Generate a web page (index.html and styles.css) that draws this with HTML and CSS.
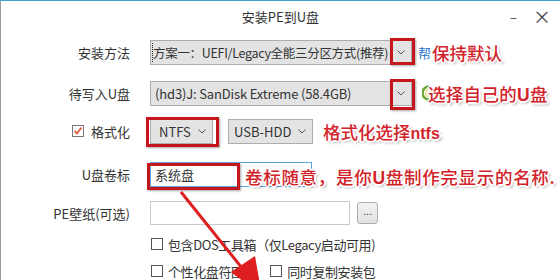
FILE: index.html
```html
<!DOCTYPE html>
<html lang="zh-CN">
<head>
    <meta charset="UTF-8">
    <title>安装PE到U盘</title>
    <link rel="stylesheet" href="styles.css">
</head>
<body>
    <div class="window">
        <div class="titlebar">
            <span></span>
            <span class="title">安装PE到U盘</span>
            <span class="controls">
                <span class="min">–</span>
                <span class="close">×</span>
            </span>
        </div>

        <div class="row r1">
            <label class="label">安装方法</label>
            <div class="select s-method">
                <span class="value"><span class="dotted">方案一：UEFI/Legacy全能三分区方式(推荐)</span></span>
                <span class="chev"><svg width="8" height="5" viewBox="0 0 8 5"><polyline points="0.5,0.5 4,4 7.5,0.5" fill="none" stroke="#555" stroke-width="1"/></svg></span>
                <span class="mark m-arrow"></span>
            </div>
            <span class="help">帮</span>
            <span class="note">保持默认</span>
        </div>

        <div class="row r2">
            <label class="label">待写入U盘</label>
            <div class="select s-disk">
                <span class="value">(hd3)J: SanDisk Extreme (58.4GB)</span>
                <span class="chev"><svg width="8" height="5" viewBox="0 0 8 5"><polyline points="0.5,0.5 4,4 7.5,0.5" fill="none" stroke="#555" stroke-width="1"/></svg></span>
                <span class="mark m-arrow2"></span>
            </div>
            <svg class="refresh" width="8" height="16" viewBox="0 0 8 16">
                <path d="M7 1.5 A6.5 6.5 0 0 0 7 14.5" fill="none" stroke="#6aa82e" stroke-width="2.6"/>
                <path d="M7.5 4 A4 4 0 0 0 7.5 12" fill="none" stroke="#e8d44a" stroke-width="1"/>
            </svg>
            <span class="note note-disk">选择自己的<b>U</b>盘</span>
        </div>

        <div class="row r3">
            <label class="label">
                <span class="check checked"><svg width="10" height="10" viewBox="0 0 10 10"><polyline points="1.5,5 4,7.5 8.5,1.5" fill="none" stroke="#e05a36" stroke-width="1.8"/></svg></span>
                格式化
            </label>
            <div class="select s-fs">
                <span class="value">NTFS</span>
                <span class="chev"><svg width="8" height="5" viewBox="0 0 8 5"><polyline points="0.5,0.5 4,4 7.5,0.5" fill="none" stroke="#555" stroke-width="1"/></svg></span>
                <span class="mark m-fs"></span>
            </div>
            <div class="select s-mode">
                <span class="value">USB-HDD</span>
                <span class="chev"><svg width="8" height="5" viewBox="0 0 8 5"><polyline points="0.5,0.5 4,4 7.5,0.5" fill="none" stroke="#555" stroke-width="1"/></svg></span>
            </div>
            <span class="note">格式化选择<b class="small">ntfs</b></span>
        </div>

        <div class="row r4">
            <label class="label">U盘卷标</label>
            <div class="input i-label focused">
                系统盘
                <span class="mark m-label"></span>
            </div>
            <span class="note note-over">卷标随意，是你<b>U</b>盘制作完显示的名称.</span>
        </div>

        <div class="row r5">
            <label class="label">PE壁纸(可选)</label>
            <div class="input i-wall"></div>
            <button class="browse">...</button>
        </div>

        <div class="row r6 opts">
            <span class="opt"><span class="check"></span>包含DOS工具箱（仅Legacy启动可用)</span>
        </div>

        <div class="row r7 opts">
            <span class="opt"><span class="check"></span>个性化盘符图标</span>
            <span class="opt"><span class="check"></span>同时复制安装包</span>
        </div>

        <svg class="arrow" width="560" height="280" viewBox="0 0 560 280">
            <line x1="181" y1="192" x2="250" y2="278" stroke="#dd1f1f" stroke-width="3"/>
            <polygon points="262,296 231,272 255,256" fill="#dd1f1f"/>
        </svg>
    </div>
</body>
</html>
```

FILE: styles.css
```css
* {
    box-sizing: border-box;
}
body {
    margin: 0;
    background: #fff;
    font-family: "Noto Sans CJK SC", "Liberation Sans", sans-serif;
    font-size: 13px;
    color: #333;
}
.window {
    position: relative;
    width: 560px;
    height: 280px;
    overflow: hidden;
    border-top: 1px solid #3c9fd0;
    border-left: 1px solid #9a9a9a;
    background: #fff;
}
.titlebar {
    display: grid;
    grid-template-columns: 1fr auto 1fr;
    align-items: center;
    height: 30px;
    margin-bottom: 8px;
}
.title {
    font-size: 13px;
    color: #333;
}
.controls {
    display: flex;
    justify-content: flex-end;
    gap: 16px;
    padding-right: 9px;
    color: #444;
}
.controls .min {
    font-size: 13px;
}
.controls .close {
    font-size: 18px;
    line-height: 1;
}
.row {
    position: relative;
    display: flex;
    align-items: center;
    height: 26px;
}
.r2 { margin-top: 15px; }
.r3 { margin-top: 12px; }
.r4 { margin-top: 17px; }
.r5 { margin-top: 13px; }
.r6 { margin-top: 10px; height: 16px; }
.r7 { margin-top: 11px; height: 16px; }
.label {
    display: flex;
    align-items: center;
    justify-content: flex-end;
    gap: 7px;
    width: 129px;
    margin-right: 20px;
    white-space: nowrap;
}
.select {
    position: relative;
    display: flex;
    align-items: center;
    height: 25px;
    background: #e3e3e3;
    border: 1px solid #adadad;
    white-space: nowrap;
}
.select .value {
    flex: 1;
    padding-left: 4px;
    overflow: hidden;
}
.select .chev {
    display: flex;
    align-items: center;
    justify-content: center;
    width: 20px;
}
.dotted {
    display: block;
    outline: 1px dotted #222;
    padding: 1px 1px 1px 0;
}
.s-method { width: 262px; }
.s-method .value {
    padding-left: 2px;
    font-size: 12.5px;
    letter-spacing: -0.3px;
}
.s-disk { width: 262px; }
.s-disk .value { letter-spacing: -0.15px; }
.s-fs { width: 63px; }
.s-mode { width: 85px; margin-left: 15px; }
.s-mode .value { padding-left: 5px; }
.s-fs .value { padding-left: 8px; }
.mark {
    position: absolute;
    border: 3px solid #c4161c;
    box-shadow: 1px 1px 2px rgba(0, 0, 0, 0.35);
}
.m-arrow { right: -4px; top: -3px; width: 25px; height: 27px; }
.m-arrow2 { right: -4px; top: -3px; width: 25px; height: 31px; }
.m-fs { left: -5px; top: -3px; width: 73px; height: 30px; }
.m-label { left: -4px; top: 0; width: 93px; height: 27px; }
.help {
    margin-left: 6px;
    color: #2a73c8;
}
.refresh {
    margin-left: 10px;
}
.note {
    font-size: 17.5px;
    font-weight: 500;
    color: #d3232a;
    white-space: nowrap;
    text-shadow: -1px -1px 0 #fff, 1px -1px 0 #fff, -1px 1px 0 #fff, 1px 1px 0 #fff,
        0 -2px 0 #fff, 0 2px 0 #fff, -2px 0 0 #fff, 2px 0 0 #fff,
        2px 2px 3px rgba(0, 0, 0, 0.45);
}
.note b {
    font-family: "Liberation Sans", sans-serif;
    font-weight: bold;
}
.note b.small {
    font-size: 16px;
}
.r1 .note { margin-left: 1px; }
.r3 .note { margin-left: 10px; }
.note-disk { margin-left: -2px; letter-spacing: 0.3px; }
.note-over {
    position: absolute;
    left: 244px;
    top: 3px;
    letter-spacing: 0.7px;
}
.input {
    position: relative;
    display: flex;
    align-items: center;
    height: 25px;
    background: #fff;
    border: 1px solid #c9c9c9;
    padding-left: 4px;
}
.i-label { width: 162px; }
.focused { border-color: #5aa7e0; }
.i-wall { width: 200px; height: 24px; }
.browse {
    width: 21px;
    height: 22px;
    margin-left: 7px;
    padding: 0 0 4px;
    border: 1px solid #adadad;
    border-radius: 3px;
    background: linear-gradient(#f2f2f2, #e2e2e2);
    font-family: "Liberation Sans", sans-serif;
    font-size: 11px;
    color: #333;
}
.opts {
    padding-left: 150px;
    gap: 14px;
}
.opt {
    display: flex;
    align-items: center;
    gap: 5px;
    white-space: nowrap;
    letter-spacing: -0.4px;
}
.check {
    display: inline-flex;
    align-items: center;
    justify-content: center;
    width: 12px;
    height: 12px;
    border: 1px solid #555;
    background: #fff;
}
.check.checked {
    border-color: #777;
}
.arrow {
    position: absolute;
    left: -1px;
    top: -1px;
    pointer-events: none;
}
```
